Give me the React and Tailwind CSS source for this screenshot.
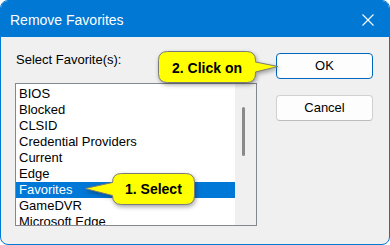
import React from "react";

const items = [
  "BIOS",
  "Blocked",
  "CLSID",
  "Credential Providers",
  "Current",
  "Edge",
  "Favorites",
  "GameDVR",
  "Microsoft Edge",
];

const Callout = ({ className, width, height, d, children, textClass }) => (
  <div className={`absolute ${className}`} style={{ width, height }}>
    <svg
      width={width}
      height={height}
      className="absolute inset-0 drop-shadow-[1px_2px_2px_rgba(0,0,0,0.35)]"
    >
      <path d={d} fill="#ffff00" stroke="#7a7a7a" strokeWidth="1" />
    </svg>
    <span
      className={`absolute text-[14px] font-bold leading-[16px] text-black whitespace-nowrap ${textClass}`}
    >
      {children}
    </span>
  </div>
);

const App = () => {
  return (
    <div className="w-[390px] h-[245px] bg-white" style={{ fontFamily: "'Liberation Sans', Arial, sans-serif" }}>
      <div className="relative w-[390px] h-[245px] rounded-[8px] border border-[#0078d4] bg-[#f0f0f0] overflow-hidden flex flex-col">
        {/* Title bar */}
        <div className="h-[36px] bg-[#0078d4] flex items-center justify-between shrink-0">
          <span className="pl-[9px] pt-[2px] text-[14px] leading-[16px] text-white">Remove Favorites</span>
          <svg width="12" height="12" viewBox="0 0 12 12" className="mr-[15px] mt-[2px]">
            <path d="M0.5 0.5 L11.5 11.5 M11.5 0.5 L0.5 11.5" stroke="#ffffff" strokeWidth="1.1" fill="none" />
          </svg>
        </div>

        {/* Body */}
        <div className="flex pl-[14px] pt-[15px]">
          <div className="w-[242px] flex flex-col">
            <span className="text-[13px] leading-[16px] text-black pl-px">Select Favorite(s):</span>
            <div className="mt-[15px] h-[143px] border border-[#828790] bg-white flex overflow-hidden">
              <div className="flex-1 pt-[2px]">
                {items.map((it) => (
                  <div
                    key={it}
                    className={`h-[16px] pl-[3px] text-[13px] leading-[16px] whitespace-nowrap ${
                      it === "Favorites" ? "bg-[#0078d7] text-white" : "text-black"
                    }`}
                  >
                    {it}
                  </div>
                ))}
              </div>
              <div className="w-[21px] bg-[#f0f0f0] pt-[23px] pl-[7px]">
                <div className="w-[3px] h-[49px] rounded-full bg-[#8a8a8a]" />
              </div>
            </div>
          </div>

          <div className="ml-[19px] mt-px flex flex-col gap-[16px]">
            <button className="w-[97px] h-[26px] rounded-[4px] border border-[#0067c0] bg-[#fdfdfd] text-[13px] text-black leading-[16px]">
              OK
            </button>
            <button className="w-[97px] h-[26px] rounded-[4px] border border-[#d0d0d0] border-b-[#bcbcbc] bg-[#fdfdfd] text-[13px] text-black leading-[16px]">
              Cancel
            </button>
          </div>
        </div>

        {/* Callouts */}
        <Callout
          className="left-[149px] top-[44px]"
          width={132}
          height={44}
          d="M17.5 6.5 H96.5 Q105.5 6.5 105.5 15.5 V17 L128 21.5 L105.5 27 V28.5 Q105.5 37.5 96.5 37.5 H17.5 Q8.5 37.5 8.5 28.5 V15.5 Q8.5 6.5 17.5 6.5 Z"
          textClass="left-[22px] top-[15px]"
        >
          2. Click on
        </Callout>
        <Callout
          className="left-[79px] top-[164px]"
          width={120}
          height={46}
          d="M41.5 8.5 H105.5 Q114.5 8.5 114.5 17.5 V30.5 Q114.5 39.5 105.5 39.5 H41.5 Q32.5 39.5 32.5 30.5 L5 23.5 L32.5 17.5 Q32.5 8.5 41.5 8.5 Z"
          textClass="left-[45px] top-[16px]"
        >
          1. Select
        </Callout>
      </div>
    </div>
  );
};

export default App;
